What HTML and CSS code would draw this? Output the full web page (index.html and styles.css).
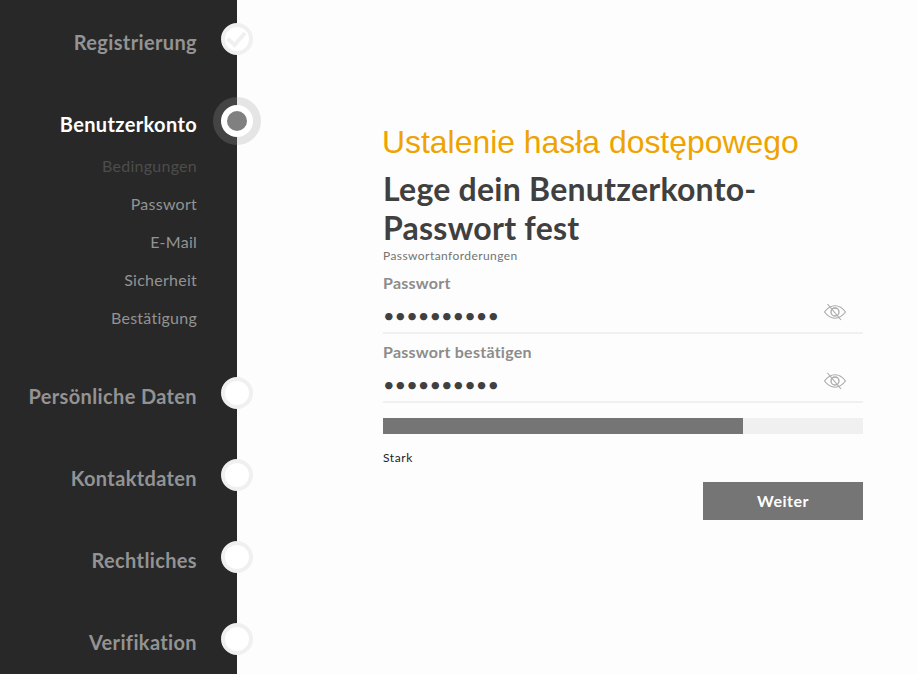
FILE: index.html
```html
<!DOCTYPE html>
<html lang="de">
<head>
<meta charset="utf-8">
<title>Benutzerkonto</title>
<link rel="stylesheet" href="styles.css">
</head>
<body>
<div class="app">
  <nav class="side">
    <div class="step first">
      <span class="step-label">Registrierung</span>
      <span class="dot">
        <svg class="check" viewBox="0 0 24 24" width="24" height="24"><path d="M2.500 11.500l7 6.500L20 6" fill="none" stroke="#f0f0f0" stroke-width="4"/></svg>
      </span>
    </div>
    <div class="step active">
      <span class="step-label">Benutzerkonto</span>
      <span class="dot"><span class="pip"></span></span>
    </div>
    <ul class="subs">
      <li class="sub dim">Bedingungen</li>
      <li class="sub">Passwort</li>
      <li class="sub">E-Mail</li>
      <li class="sub">Sicherheit</li>
      <li class="sub">Bestätigung</li>
    </ul>
    <div class="step after-subs">
      <span class="step-label">Persönliche Daten</span>
      <span class="dot"></span>
    </div>
    <div class="step">
      <span class="step-label">Kontaktdaten</span>
      <span class="dot"></span>
    </div>
    <div class="step">
      <span class="step-label">Rechtliches</span>
      <span class="dot"></span>
    </div>
    <div class="step">
      <span class="step-label">Verifikation</span>
      <span class="dot"></span>
    </div>
  </nav>
  <main class="main">
    <form class="form">
      <p class="banner">Ustalenie hasła dostępowego</p>
      <h1 class="title">Lege dein Benutzerkonto-<br>Passwort fest</h1>
      <p class="req">Passwortanforderungen</p>
      <div class="field">
        <label class="field-label">Passwort</label>
        <div class="input-row">
          <span class="dots">••••••••••</span>
          <svg class="eye" viewBox="0 0 24 18" width="24" height="18"><path d="M1.500 9C5 4.500 8.500 2.800 12 2.800S19 4.500 22.500 9C19 13.500 15.500 15.200 12 15.200S5 13.500 1.500 9z" fill="none" stroke="#a8a8a8" stroke-width="1.100"/><circle cx="12" cy="9" r="4" fill="none" stroke="#a8a8a8" stroke-width="1.300"/><path d="M4.500 1L18 17" stroke="#a8a8a8" stroke-width="1.100"/></svg>
        </div>
      </div>
      <div class="field">
        <label class="field-label">Passwort bestätigen</label>
        <div class="input-row">
          <span class="dots">••••••••••</span>
          <svg class="eye" viewBox="0 0 24 18" width="24" height="18"><path d="M1.500 9C5 4.500 8.500 2.800 12 2.800S19 4.500 22.500 9C19 13.500 15.500 15.200 12 15.200S5 13.500 1.500 9z" fill="none" stroke="#a8a8a8" stroke-width="1.100"/><circle cx="12" cy="9" r="4" fill="none" stroke="#a8a8a8" stroke-width="1.300"/><path d="M4.500 1L18 17" stroke="#a8a8a8" stroke-width="1.100"/></svg>
        </div>
      </div>
      <div class="meter"><div class="meter-fill"></div></div>
      <p class="strength">Stark</p>
      <div class="actions"><button class="next" type="button">Weiter</button></div>
    </form>
  </main>
</div>
</body>
</html>
```
FILE: styles.css
```css
* { box-sizing: border-box; }
html, body { margin: 0; padding: 0; height: 100%; }
body { font-family: Lato, "Liberation Sans", sans-serif; background: #fdfdfd; overflow: hidden; }
.app { display: flex; height: 674px; }
.side { width: 237px; flex: none; background: #282828; display: flex; flex-direction: column; align-items: stretch; }
.step { display: flex; justify-content: flex-end; align-items: center; gap: 24px; height: 32px; margin-top: 50px; margin-right: -16px; }
.step.first { margin-top: 23px; }
.step-label { font-size: 20px; letter-spacing: .36px; font-weight: 700; color: #939393; padding-top: 5px; }
.dot { width: 32px; height: 32px; flex: none; border-radius: 50%; background: #fff; border: 4px solid #f0f0f0; display: flex; align-items: center; justify-content: center; position: relative; z-index: 1; }
.check { display: block; flex: none; }
.active .step-label { color: #fff; }
.active .dot { border: 0; background: #fff; box-shadow: 0 0 0 8px rgba(155,155,155,.245); }
.pip { width: 20px; height: 20px; border-radius: 50%; background: #808080; }
.subs { list-style: none; margin: 10px 0 0; padding: 0 40px 0 0; display: flex; flex-direction: column; }
.sub { height: 38px; line-height: 38px; text-align: right; font-size: 16px; letter-spacing: .25px; color: #939393; }
.sub.dim { color: #4d4d4d; }
.after-subs { margin-top: 40px; }
.main { flex: 1; padding: 123px 55px 0 146px; }
.form { display: flex; flex-direction: column; }
.banner { margin: 0 0 0 -1px; font-family: "Liberation Sans", Arial, sans-serif; font-size: 31.9px; line-height: 38px; color: #eea300; }
.title { margin: 8px 0 0; font-size: 32px; letter-spacing: .25px; line-height: 39px; font-weight: 700; color: #404040; }
.req { margin: 1px 0 0; font-size: 12px; letter-spacing: .43px; line-height: 15px; color: #737373; }
.field { margin-top: 10px; }
.field-label { display: block; font-size: 16px; letter-spacing: .25px; font-weight: 700; line-height: 20px; color: #8c8c8c; }
.field + .field { margin-top: 8px; }
.input-row { display: flex; justify-content: space-between; align-items: center; height: 41px; padding: 0 16px 0 0; border-bottom: 2px solid #f0f0f0; }
.dots { font-size: 20px; line-height: 30px; color: #404040; letter-spacing: 0; margin-top: 4px; }
.eye { display: block; margin-top: -1px; }
.meter { margin-top: 15px; height: 16px; background: #f0f0f0; }
.meter-fill { width: 75%; height: 100%; background: #757575; }
.strength { margin: 16px 0 0; font-size: 12px; letter-spacing: .6px; line-height: 16px; color: #222; }
.actions { display: flex; justify-content: flex-end; margin-top: 16px; }
.next { width: 160px; height: 38px; border: 0; padding: 0 0 2px; background: #757575; color: #fff; font-family: inherit; font-size: 16px; letter-spacing: .5px; font-weight: 700; }
```
